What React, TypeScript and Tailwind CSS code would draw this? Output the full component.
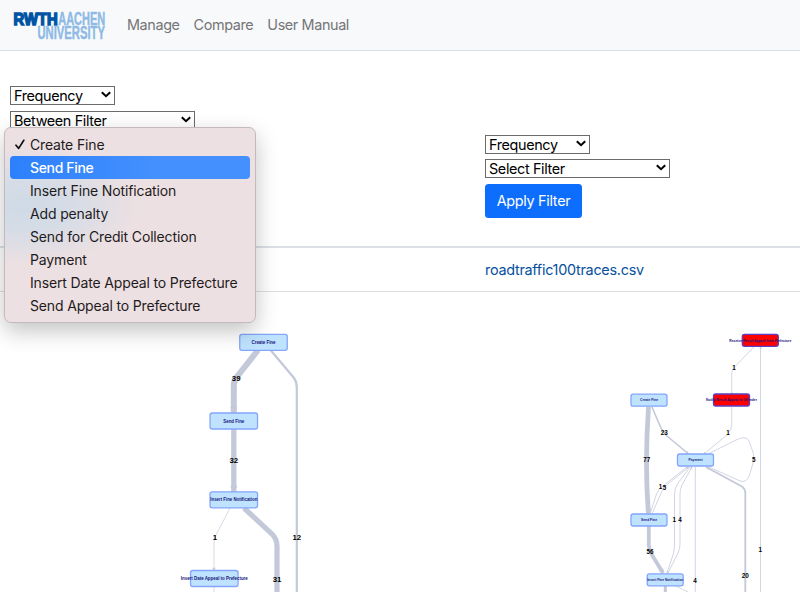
import React from "react";

const SANS = "font-['Inter','Liberation_Sans',sans-serif]";

function Logo() {
  return (
    <svg width="94" height="30" viewBox="0 0 94 30" className="block overflow-visible" fontFamily="Liberation Sans, Arial, sans-serif" fontWeight="700">
      <text x="0.6" y="14.6" fontSize="16.6" textLength="44" lengthAdjust="spacingAndGlyphs" fill="#0054a4" stroke="#0054a4" strokeWidth="1.5">RWTH</text>
      <text x="45.2" y="15" fontSize="17.8" textLength="47" lengthAdjust="spacingAndGlyphs" fill="#8ebae5" stroke="#8ebae5" strokeWidth="0.45">AACHEN</text>
      <text x="24.5" y="28.8" fontSize="17.8" textLength="67.5" lengthAdjust="spacingAndGlyphs" fill="#8ebae5" stroke="#8ebae5" strokeWidth="0.45">UNIVERSITY</text>
    </svg>
  );
}

function Select({ label, className }: { label: string; className: string }) {
  return (
    <div className={`flex h-[19px] items-center justify-between border border-[#6b6b6b] bg-white pl-[3px] pr-[3px] text-[14.4px] leading-[17px] tracking-[-0.36px] text-black ${className}`}>
      <span className="whitespace-nowrap">{label}</span>
      <svg width="10" height="7" viewBox="0 0 10 7" className="mb-0.5 shrink-0" fill="none" stroke="#000" strokeWidth="2">
        <path d="M0.8 1.2 5 5.2 9.2 1.2" />
      </svg>
    </div>
  );
}

const OPTIONS = [
  "Create Fine",
  "Send Fine",
  "Insert Fine Notification",
  "Add penalty",
  "Send for Credit Collection",
  "Payment",
  "Insert Date Appeal to Prefecture",
  "Send Appeal to Prefecture",
];

function Menu() {
  return (
    <div className="absolute left-1 top-[127px] z-10 h-[196px] w-[252px] rounded-[7px] border border-[#c4babd] bg-[#ede0e2] bg-[radial-gradient(ellipse_115px_60px_at_20px_78px,#cfdae6_0%,#d5dce6_40%,#ede0e200_100%)] px-[5px] py-[5px] shadow-[0_8px_22px_rgba(0,0,0,0.24)]">
      {OPTIONS.map((label, i) => (
        <div
          key={label}
          className={`relative flex h-[23px] items-center rounded pl-5 text-[14px] ${i === 1 ? "bg-linear-to-r from-[#2d80fc] to-[#4390fe] to-60% font-medium tracking-[-0.35px] text-white" : "tracking-[-0.15px] text-[#1f1b1d]"}`}
        >
          {i === 0 && (
            <svg width="10" height="11" viewBox="0 0 10 11" className="absolute left-[5px] top-[6px]" fill="none" stroke="#111" strokeWidth="1.7" strokeLinecap="round" strokeLinejoin="round">
              <path d="M1 6.2 3.7 9.4 8.8 1.3" />
            </svg>
          )}
          <span className="whitespace-nowrap">{label}</span>
        </div>
      ))}
    </div>
  );
}

type BoxProps = { x: number; y: number; w: number; h: number; label: string; tw: number; fs: number; red?: boolean };

function Node({ x, y, w, h, label, tw, fs, red }: BoxProps) {
  return (
    <g>
      <rect x={x - w / 2} y={y - h / 2} width={w} height={h} rx="2.2" fill={red ? "#ff0000" : "#bfe3ff"} stroke={red ? "#5b3fc4" : "#84a5fc"} strokeWidth="1.3" />
      <text x={x} y={y + fs * 0.34} fontSize={fs} textAnchor="middle" textLength={tw} lengthAdjust="spacingAndGlyphs" fill="#14147c">{label}</text>
    </g>
  );
}

function Count({ x, y, n, fs }: { x: number; y: number; n: number; fs: number }) {
  return <text x={x} y={y + fs * 0.36} fontSize={fs} textAnchor="middle" fill="#000">{n}</text>;
}

function Arrow({ x, y, r = 0, s = 1 }: { x: number; y: number; r?: number; s?: number }) {
  return <path d="M0 0 -1.9 -3.6 0 -2.8 1.9 -3.6Z" fill="#c3c9d9" transform={`translate(${x} ${y}) rotate(${r}) scale(${s})`} />;
}

function LeftGraph() {
  return (
    <svg width="475" height="300" viewBox="0 292 475 300" className="block" fontFamily="Liberation Sans, Arial, sans-serif" fontWeight="700">
      <g fill="none" stroke="#c3c9d9">
        <path d="M258 350 236 378Q233.8 381 233.8 386V413" strokeWidth="6" />
        <path d="M233.8 428V492" strokeWidth="5.3" />
        <path d="M244 508 272 534Q277 539 277 546V592" strokeWidth="5.2" />
        <path d="M270.5 350 294 378Q296.8 382 296.8 388V592" strokeWidth="2.2" />
        <path d="M230 508 215.5 536Q214 539 214 543V571M214 586V592" strokeWidth="1" stroke="#d8dbe5" />
      </g>
      <Arrow x={233.8} y={414} s={2} />
      <Arrow x={233.8} y={493} s={2} />
      <Arrow x={214} y={571} />
      <Node x={263.5} y={342.3} w={47.5} h={16} label="Create Fine" tw={24} fs={4.7} />
      <Node x={233.8} y={421} w={47.5} h={16} label="Send Fine" tw={21} fs={4.7} />
      <Node x={233.8} y={499.8} w={47.5} h={16} label="Insert Fine Notification" tw={47} fs={4.7} />
      <Node x={214.3} y={578.5} w={47.5} h={16} label="Insert Date Appeal to Prefecture" tw={67} fs={4.7} />
      <Count x={236.2} y={378.3} n={39} fs={7.8} />
      <Count x={233.8} y={460} n={32} fs={7.8} />
      <Count x={215} y={537.5} n={1} fs={7.8} />
      <Count x={296.8} y={537.5} n={12} fs={7.8} />
      <Count x={277} y={578.7} n={31} fs={7.8} />
    </svg>
  );
}

function RightGraph() {
  return (
    <svg width="325" height="300" viewBox="475 292 325 300" className="block" fontFamily="Liberation Sans, Arial, sans-serif" fontWeight="700">
      <g fill="none" stroke="#c3c9d9">
        <path d="M648.5 407Q644.5 465 648.5 514" strokeWidth="4.8" />
        <path d="M648.8 526V545Q649 550 652 555L663 573" strokeWidth="3.8" />
        <path d="M665.3 586V592" strokeWidth="3" />
        <path d="M652 407 660.5 427Q662.5 432 667 436L688.5 454" strokeWidth="1.6" />
        <path d="M706 467 741 486Q745.3 488.5 745.3 493V592" strokeWidth="1.8" />
        <g strokeWidth="0.95" stroke="#d0d4e0">
          <path d="M754 347 733.5 368Q731.7 370 731.7 374V394" />
          <path d="M731.7 407V425Q731.7 430 728 434L704 454" />
          <path d="M760.5 347V592" />
          <path d="M708 454 736 440Q746 435 749 441L753.3 453Q754.5 459 752.5 465L749.5 475Q747 483 740 481L709 467" />
          <path d="M650 514 656.5 494Q658.5 489 663 486L687 467" />
          <path d="M652 514 661.5 492Q664 487 669 483L689 467" />
          <path d="M667 573 673 555Q674.5 550 674.5 545V494Q674.5 489 677.5 484L690 467" />
          <path d="M668 573 678 553Q680 549 680 544V494Q680 489 682 485L692 467" />
          <path d="M695.3 467V592" />
          <path d="M676 586 688 592" />
        </g>
      </g>
      <Arrow x={731.7} y={395} s={0.75} />
      <Arrow x={760.5} y={346} r={180} s={0.75} />
      <Arrow x={648.5} y={514.5} s={1.5} />
      <Arrow x={663.5} y={574} r={-30} s={1.4} />
      <Arrow x={689} y={454.5} r={-50} />
      <Arrow x={703.5} y={454.5} r={50} s={0.8} />
      <Arrow x={706} y={466.7} r={118} />
      <Arrow x={688.5} y={466.5} r={230} s={0.8} />
      <Arrow x={692} y={466.5} r={205} s={0.8} />
      <Arrow x={667} y={574} r={18} s={0.75} />
      <Node x={760.3} y={340.3} w={36} h={12} label="Receive Result Appeal from Prefecture" tw={62} fs={3.6} red />
      <Node x={731.5} y={400} w={36} h={12} label="Notify Result Appeal to Offender" tw={51} fs={3.6} red />
      <Node x={649} y={400.2} w={36} h={12} label="Create Fine" tw={18} fs={3.6} />
      <Node x={695.5} y={460} w={36} h={12} label="Payment" tw={14} fs={3.6} />
      <Node x={649} y={520} w={36} h={12} label="Send Fine" tw={16} fs={3.6} />
      <Node x={665.2} y={579.8} w={36} h={12} label="Insert Fine Notification" tw={36} fs={3.6} />
      <Count x={734} y={368} n={1} fs={6.3} />
      <Count x={728} y={432.8} n={1} fs={6.3} />
      <Count x={664.3} y={432.8} n={23} fs={6.3} />
      <Count x={646.7} y={460} n={77} fs={6.3} />
      <Count x={753.7} y={460} n={5} fs={6.3} />
      <Count x={660.5} y={487} n={1} fs={6.3} />
      <Count x={664.5} y={488} n={5} fs={6.3} />
      <Count x={674.3} y={519.3} n={1} fs={6.3} />
      <Count x={680} y={520.2} n={4} fs={6.3} />
      <Count x={760.3} y={549.8} n={1} fs={6.3} />
      <Count x={650} y={551.8} n={56} fs={6.3} />
      <Count x={745.3} y={575.8} n={20} fs={6.3} />
      <Count x={695} y={580.3} n={4} fs={6.3} />
    </svg>
  );
}

export default function App() {
  return (
    <div className={`relative h-[592px] w-[800px] overflow-hidden bg-white ${SANS}`}>
      <header className="flex h-[51px] items-center border-b border-[#d8e0e8] bg-[#f8f9fb] pl-[13px]">
        <Logo />
        <nav className="ml-5 flex gap-[14px] text-[14.4px] leading-5 tracking-[-0.38px] text-[#747576]">
          <a>Manage</a>
          <a>Compare</a>
          <a>User Manual</a>
        </nav>
      </header>
      <main>
        <section className="grid h-[197px] grid-cols-[475px_325px] border-b-2 border-[#dde1e5]">
          <div className="flex flex-col gap-[6px] pl-[10px] pt-[35px]">
            <Select label="Frequency" className="w-[105px]" />
            <Select label="Between Filter" className="w-[185px]" />
          </div>
          <div className="flex flex-col pl-[10px] pt-[84px]">
            <Select label="Frequency" className="w-[105px]" />
            <Select label="Select Filter" className="mt-[5px] w-[185px]" />
            <button className="mt-[6px] h-[34px] w-[97px] whitespace-nowrap rounded-[3.5px] bg-[#0d6efd] text-[14.4px] tracking-[-0.3px] text-white">Apply Filter</button>
          </div>
        </section>
        <section className="grid h-[44px] grid-cols-[475px_325px] items-center border-b border-[#dddfe2]">
          <span />
          <a className="pl-[10px] text-[14.4px] tracking-[-0.27px] text-[#07509f]">roadtraffic100traces.csv</a>
        </section>
        <section className="grid grid-cols-[475px_325px]">
          <LeftGraph />
          <RightGraph />
        </section>
      </main>
      <Menu />
    </div>
  );
}
